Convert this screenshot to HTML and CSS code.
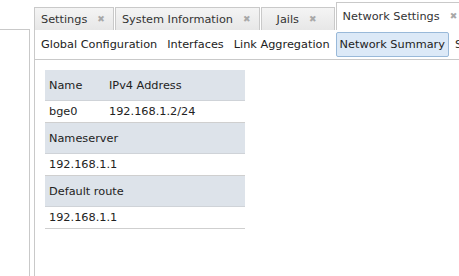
FILE: index.html
```html
<!DOCTYPE html>
<html>
<head>
<meta charset="utf-8">
<link rel="stylesheet" href="styles.css">
</head>
<body>
<div class="app">
  <div class="sidebar"></div>
  <div class="main">
    <div class="tabs">
      <div class="tab"><span class="tab-label">Settings</span><span class="tab-close">✖</span></div>
      <div class="tab"><span class="tab-label">System Information</span><span class="tab-close">✖</span></div>
      <div class="tab"><span class="tab-label">Jails</span><span class="tab-close">✖</span></div>
      <div class="tab active"><span class="tab-label">Network Settings</span><span class="tab-close">✖</span></div>
    </div>
    <div class="panel">
      <div class="subnav">
        <span class="subnav-item">Global Configuration</span>
        <span class="subnav-item">Interfaces</span>
        <span class="subnav-item">Link Aggregation</span>
        <span class="subnav-item selected">Network Summary</span>
        <span class="subnav-item">Static Routes</span>
      </div>
      <div class="content">
        <table class="summary">
          <tr class="head"><td class="c1">Name</td><td>IPv4 Address</td></tr>
          <tr class="row"><td class="c1">bge0</td><td>192.168.1.2/24</td></tr>
          <tr class="head"><td colspan="2">Nameserver</td></tr>
          <tr class="row"><td colspan="2">192.168.1.1</td></tr>
          <tr class="head"><td colspan="2">Default route</td></tr>
          <tr class="row"><td colspan="2">192.168.1.1</td></tr>
        </table>
      </div>
    </div>
  </div>
</div>
</body>
</html>
```
FILE: styles.css
```css
html, body {
  margin: 0;
  padding: 0;
  background: #ffffff;
}
body {
  font-family: "DejaVu Sans", Verdana, sans-serif;
  font-size: 11.3px;
  color: #222;
  overflow: hidden;
}
.app {
  display: flex;
  height: 276px;
  gap: 4px;
}
.sidebar {
  width: 29px;
  flex: none;
  margin-top: 29px;
  border-top: 1px solid #c9c9c9;
  border-right: 1px solid #c9c9c9;
}
.main {
  flex: 1;
  display: flex;
  flex-direction: column;
  min-width: 0;
  overflow: hidden;
}
.tabs {
  display: flex;
  align-items: flex-end;
  height: 30px;
  gap: 1px;
  white-space: nowrap;
}
.tab {
  flex: none;
  box-sizing: border-box;
  display: flex;
  align-items: center;
  justify-content: center;
  min-width: 74px;
  height: 23px;
  padding: 0 8px 0 6px;
  gap: 10px;
  background: linear-gradient(#f4f4f4, #e7e7e7);
  border: 1px solid #c9c9c9;
  border-bottom: none;
  color: #333;
}
.tab.active {
  height: 28px;
  background: #ffffff;
  padding-bottom: 1px;
}
.tab-close {
  color: #a8a8a8;
  font-size: 9px;
  font-weight: bold;
}
.panel {
  flex: 1;
  border-left: 1px solid #c9c9c9;
  display: flex;
  flex-direction: column;
}
.subnav {
  height: 29px;
  display: flex;
  align-items: center;
  gap: 2px;
  padding-left: 2px;
  border-bottom: 1px solid #c9c9c9;
  white-space: nowrap;
}
.subnav-item {
  padding: 5px 3px;
  border: 1px solid transparent;
  border-radius: 2px;
  color: #222;
}
.subnav-item.selected {
  background: #dce9f7;
  border-color: #99b9d9;
}
.content {
  padding: 10px 10px;
}
.summary {
  width: 200px;
  border-collapse: collapse;
}
.summary td {
  padding: 0 4px;
  white-space: nowrap;
}
.summary .c1 {
  width: 52px;
}
.summary .head td {
  background: #dde3ea;
  height: 30px;
  border-bottom: 1px solid #cfd3d8;
}
.summary .row td {
  height: 21px;
  border-bottom: 1px solid #cfcfcf;
}
```
